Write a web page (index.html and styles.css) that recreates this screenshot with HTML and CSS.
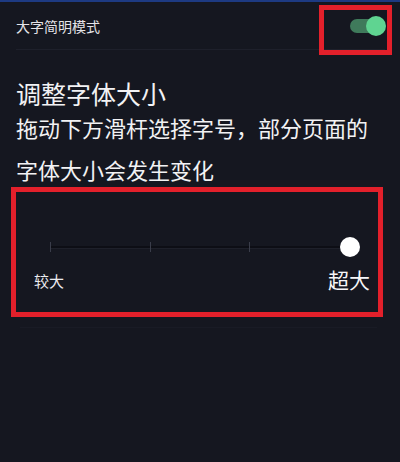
FILE: index.html
```html
<!DOCTYPE html>
<html lang="zh-CN">
<head>
<meta charset="utf-8">
<title>大字简明模式</title>
<link rel="stylesheet" href="styles.css">
</head>
<body>
<div class="page">
  <div class="topline"></div>
  <div class="row">
    <span class="row-label">大字简明模式</span>
    <span class="switch"><span class="switch-knob"></span></span>
  </div>
  <section class="section">
    <h1 class="title">调整字体大小</h1>
    <p class="desc">拖动下方滑杆选择字号，部分页面的<br>字体大小会发生变化</p>
    <div class="slider">
      <div class="track">
        <span class="tick"></span><span class="tick"></span><span class="tick"></span><span class="tick"></span>
        <span class="knob"></span>
      </div>
    </div>
    <div class="labels">
      <span class="label-small">较大</span>
      <span class="label-big">超大</span>
    </div>
  </section>
  <div class="divider"></div>
  <div class="mark mark-switch"></div>
  <div class="mark mark-slider"></div>
</div>
</body>
</html>
```

FILE: styles.css
```css
html, body {
  margin: 0;
  padding: 0;
  background: #151720;
}
body {
  font-family: "Noto Sans CJK SC", "Noto Sans", sans-serif;
  color: #f2f2f4;
}
.page {
  position: relative;
  width: 400px;
  height: 462px;
  overflow: hidden;
  background: #151720;
}
.topline {
  height: 2px;
  background: #1d3a82;
}
.row {
  display: flex;
  align-items: center;
  justify-content: space-between;
  height: 47px;
  margin: 0 15px 0 16px;
  border-bottom: 1px solid #1e202b;
}
.row-label {
  font-size: 14px;
  line-height: 20px;
  color: #e4e4e8;
}
.switch {
  position: relative;
  display: block;
  width: 32px;
  height: 14px;
  border-radius: 7px;
  background: #3f7a5b;
  margin-right: 3px;
}
.switch-knob {
  position: absolute;
  right: -4px;
  top: -3px;
  width: 20px;
  height: 20px;
  border-radius: 50%;
  background: #5fd491;
}
.section {
  padding-top: 29px;
}
.title {
  margin: 0 16px;
  font-size: 25px;
  font-weight: 400;
  line-height: 28px;
}
.desc {
  margin: -1px 16px 0;
  font-size: 22px;
  line-height: 42px;
}
.slider {
  margin: 47px 50px 0;
}
.track {
  position: relative;
  display: flex;
  justify-content: space-between;
  align-items: center;
  height: 20px;
}
.track::before {
  content: "";
  position: absolute;
  left: 0;
  right: 0;
  top: 9px;
  height: 2px;
  background: #0d0e15;
  border-bottom: 1px solid #1e202a;
}
.tick {
  position: relative;
  width: 1px;
  height: 10px;
  background: #3a3d4a;
}
.knob {
  position: absolute;
  right: -10px;
  top: 0;
  width: 20px;
  height: 20px;
  border-radius: 50%;
  background: #ffffff;
}
.labels {
  display: flex;
  justify-content: space-between;
  align-items: center;
  margin: 10px 30px 0 34px;
  height: 24px;
}
.label-small {
  font-size: 15px;
  line-height: 20px;
  margin-top: 4px;
  color: #ececf0;
}
.label-big {
  font-size: 21px;
  line-height: 24px;
  color: #f6f6f8;
}
.divider {
  margin: 36px 23px 0 20px;
  height: 1px;
  background: #191b25;
}
.mark {
  position: absolute;
  box-sizing: border-box;
  border: 5px solid #e3202b;
}
.mark-switch {
  left: 319px;
  top: 5px;
  width: 73px;
  height: 50px;
}
.mark-slider {
  left: 11px;
  top: 187px;
  width: 372px;
  height: 130px;
}
```
